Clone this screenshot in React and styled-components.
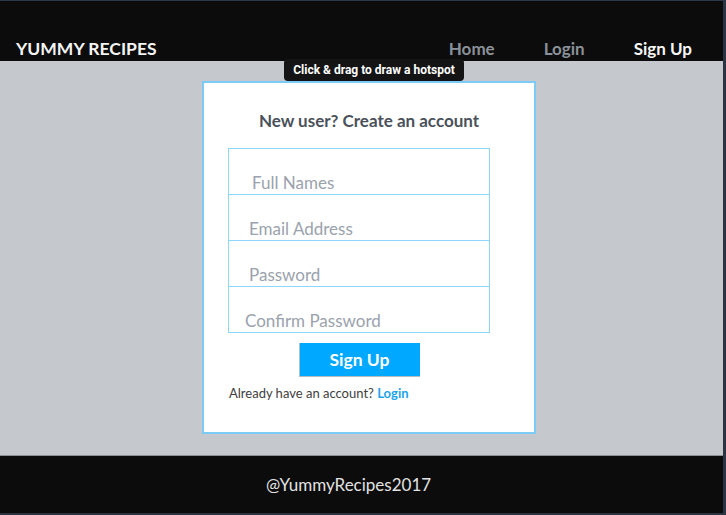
import React from 'react';
import styled, { createGlobalStyle } from 'styled-components';

const GlobalStyle = createGlobalStyle`
  html, body {
    margin: 0;
    padding: 0;
    background: #2b3442;
  }
  * {
    box-sizing: border-box;
  }
`;

const Frame = styled.div`
  position: relative;
  width: 726px;
  height: 515px;
  border-top: 1px solid #2f3846;
  border-right: 3px solid #2b3442;
  border-bottom: 2px solid #2b3442;
  display: flex;
  flex-direction: column;
  font-family: Lato, 'Open Sans', sans-serif;
`;

const Header = styled.header`
  height: 60px;
  background: #0c0c0c;
  display: flex;
  align-items: flex-end;
  justify-content: space-between;
  padding: 0 31px 0 16px;
`;

const Brand = styled.div`
  color: #f4f4f4;
  font-weight: 700;
  font-size: 17.5px;
  line-height: 22px;
  padding-bottom: 1px;
`;

const Nav = styled.nav`
  display: flex;
  gap: 49px;
  padding-bottom: 1px;
`;

const NavLink = styled.a`
  color: ${(props) => (props.active ? '#f6f6f6' : '#8a9199')};
  font-weight: 700;
  font-size: 17px;
  line-height: 22px;
  text-decoration: none;
`;

const Main = styled.main`
  flex: 1;
  background: #c5c8cc;
  border-bottom: 1px solid #8c9096;
  padding: 20px 0 0 202px;
`;

const Card = styled.section`
  width: 334px;
  height: 353px;
  background: #fff;
  border: 2px solid #7ccaf6;
  padding: 27px 0 0 24px;
`;

const Title = styled.h2`
  margin: 0 0 16px -24px;
  text-align: center;
  color: #4a515b;
  font-weight: 700;
  font-size: 17px;
  line-height: 22px;
`;

const Form = styled.form`
  width: 262px;
  display: flex;
  flex-direction: column;
`;

const Input = styled.input`
  display: block;
  width: 100%;
  height: 47px;
  margin-top: ${(props) => (props.first ? '0' : '-1px')};
  border: 1px solid #8dd6fd;
  padding: 22px 0 0 ${(props) => props.indent}px;
  font-family: Lato, sans-serif;
  font-size: 17px;
  color: #333;
  outline: none;
  background: #fff;

  &::placeholder {
    color: #9aa2ad;
  }
`;

const Button = styled.button`
  align-self: center;
  width: 121px;
  height: 34px;
  margin-top: 10px;
  background: #00a8ff;
  border: none;
  border-left: 1px solid #b4bcc4;
  border-bottom: 1px solid #b4bcc4;
  color: #fff;
  font-family: Lato, sans-serif;
  font-weight: 700;
  font-size: 17.5px;
  padding: 0;
`;

const Note = styled.p`
  margin: 8px 0 0 1px;
  font-size: 13px;
  line-height: 16px;
  color: #404040;
`;

const NoteLink = styled.a`
  color: #1ba4ec;
  font-weight: 700;
  text-decoration: none;
`;

const Footer = styled.footer`
  height: 57px;
  background: #0c0c0c;
  display: flex;
  align-items: center;
  justify-content: center;
  padding-right: 26px;
  color: #e2e2e2;
  font-size: 17px;
`;

const Tooltip = styled.div`
  position: absolute;
  left: 284px;
  top: 58px;
  width: 180px;
  height: 22px;
  background: #141414;
  border-radius: 4px;
  color: #fff;
  font-family: Roboto, 'Liberation Sans', sans-serif;
  font-weight: 700;
  font-size: 12px;
  display: flex;
  align-items: center;
  justify-content: center;
`;

const fields = [
  { placeholder: 'Full Names', indent: 23, type: 'text' },
  { placeholder: 'Email Address', indent: 20, type: 'email' },
  { placeholder: 'Password', indent: 20, type: 'password' },
  { placeholder: 'Confirm Password', indent: 16, type: 'password' },
];

const App = () => (
  <>
    <GlobalStyle />
    <Frame>
      <Header>
        <Brand>YUMMY RECIPES</Brand>
        <Nav>
          <NavLink href="#">Home</NavLink>
          <NavLink href="#">Login</NavLink>
          <NavLink href="#" active>
            Sign Up
          </NavLink>
        </Nav>
      </Header>
      <Main>
        <Card>
          <Title>New user? Create an account</Title>
          <Form onSubmit={(e) => e.preventDefault()}>
            {fields.map((f, i) => (
              <Input
                key={f.placeholder}
                first={i === 0}
                type={f.type}
                indent={f.indent}
                placeholder={f.placeholder}
              />
            ))}
            <Button type="submit">Sign Up</Button>
          </Form>
          <Note>
            Already have an account? <NoteLink href="#">Login</NoteLink>
          </Note>
        </Card>
      </Main>
      <Footer>@YummyRecipes2017</Footer>
      <Tooltip>Click &amp; drag to draw a hotspot</Tooltip>
    </Frame>
  </>
);

export default App;
